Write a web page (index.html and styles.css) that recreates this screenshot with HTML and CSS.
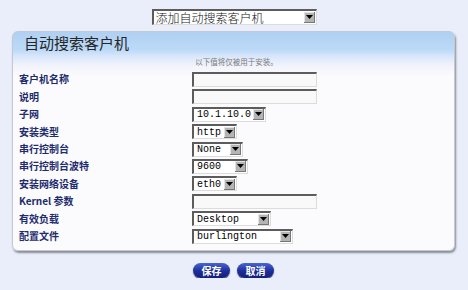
FILE: index.html
```html
<!DOCTYPE html>
<html lang="zh-CN">
<head>
  <meta charset="UTF-8" />
  <title>自动搜索客户机</title>
  <link rel="stylesheet" href="styles.css">
</head>
<body>
  <div class="top">
    <div class="pick top-pick">添加自动搜索客户机<span class="arrow"><svg width="7" height="5" viewBox="0 0 7 5"><path d="M0 0h7L3.5 4z" fill="#000"/></svg></span></div>
  </div>

  <div class="panel">
    <div class="panel-head"><h2>自动搜索客户机</h2></div>
    <p class="note">以下值将仅被用于安装。</p>
    <div class="form">
      <label>客户机名称</label><div class="box w-text"></div>
      <label>说明</label><div class="box w-text"></div>
      <label>子网</label><div class="box pick w-subnet">10.1.10.0<span class="arrow"><svg width="7" height="5" viewBox="0 0 7 5"><path d="M0 0h7L3.5 4z" fill="#000"/></svg></span></div>
      <label>安装类型</label><div class="box pick w-http">http<span class="arrow"><svg width="7" height="5" viewBox="0 0 7 5"><path d="M0 0h7L3.5 4z" fill="#000"/></svg></span></div>
      <label>串行控制台</label><div class="box pick w-none">None<span class="arrow"><svg width="7" height="5" viewBox="0 0 7 5"><path d="M0 0h7L3.5 4z" fill="#000"/></svg></span></div>
      <label>串行控制台波特</label><div class="box pick w-baud">9600<span class="arrow"><svg width="7" height="5" viewBox="0 0 7 5"><path d="M0 0h7L3.5 4z" fill="#000"/></svg></span></div>
      <label>安装网络设备</label><div class="box pick w-http">eth0<span class="arrow"><svg width="7" height="5" viewBox="0 0 7 5"><path d="M0 0h7L3.5 4z" fill="#000"/></svg></span></div>
      <label>Kernel 参数</label><div class="box w-text"></div>
      <label>有效负载</label><div class="box pick w-desk">Desktop<span class="arrow"><svg width="7" height="5" viewBox="0 0 7 5"><path d="M0 0h7L3.5 4z" fill="#000"/></svg></span></div>
      <label>配置文件</label><div class="box pick w-conf">burlington<span class="arrow"><svg width="7" height="5" viewBox="0 0 7 5"><path d="M0 0h7L3.5 4z" fill="#000"/></svg></span></div>
    </div>
  </div>

  <div class="actions">
    <button>保存</button>
    <button>取消</button>
  </div>
</body>
</html>
```

FILE: styles.css
```css
body { margin: 0; padding-top: 9px; background: #e9eefa; font-family: "Noto Sans CJK SC", sans-serif; color: #222; }
.top { display: flex; justify-content: center; height: 16px; margin-bottom: 6px; }

.pick, .box { box-sizing: border-box; display: flex; align-items: center; background: #fff; border-style: solid; border-width: 2px 1px 1px 2px; border-color: #5c5c5c #dcdcdc #dcdcdc #5c5c5c; }
.pick { justify-content: space-between; }
.top-pick { width: 165px; height: 16px; padding-left: 2px; font-size: 12px; line-height: 12px; font-weight: 300; color: #111; }
.arrow { display: flex; align-items: center; justify-content: center; width: 11px; height: 11px; margin-right: 1px; background: #b4b4b4; box-shadow: inset -1px -1px 0 #777, inset 1px 1px 0 #e4e4e4; }

.panel { margin: 0 13px 0 12px; border: 1px solid #c4c8d4; border-radius: 6px; height: 220px; box-sizing: border-box; box-shadow: 1px 2px 2px rgba(60,60,60,.55); background: linear-gradient(#b0d0f2 0, #bcdaf8 18px, #d8e6fa 24px, #f2f4fc 34px, #fbfafd 44px, #fbfafd 100%); }
.panel-head { height: 22px; }
.panel-head h2 { margin: 0; padding-left: 11px; font-size: 15px; line-height: 22px; font-weight: 400; color: #262626; }
.note { margin: 3px 0 0; text-align: center; font-size: 7.5px; line-height: 10px; color: #7a7a7a; padding-left: 6px; }

.form { display: grid; grid-template-columns: 173px auto; grid-auto-rows: 17.4px; align-items: center; margin-top: 3.8px; padding-left: 6px; }
.form label { font-size: 10px; font-weight: 700; color: #1d2c6c; line-height: 12px; white-space: nowrap; }
.box { height: 15px; padding-left: 3px; font-family: "Liberation Mono", monospace; font-size: 10px; color: #000; }
.w-text { width: 125px; background: #f9f9f9; }
.w-subnet { width: 74px; }
.w-http { width: 45px; }
.w-none { width: 51px; }
.w-baud { width: 56px; }
.w-desk { width: 79px; }
.w-conf { width: 101px; }

.actions { display: flex; gap: 7px; margin: 12px 0 0 193px; }
.actions button { width: 37px; height: 15px; padding: 0; border: none; border-radius: 8px; background: linear-gradient(#4a66d0, #1c2c9a 55%, #14207a); box-shadow: 0 1px 1px #3a3a6a; color: #fff; font-family: "Noto Sans CJK SC", sans-serif; font-size: 10px; font-weight: 700; line-height: 15px; }
```
